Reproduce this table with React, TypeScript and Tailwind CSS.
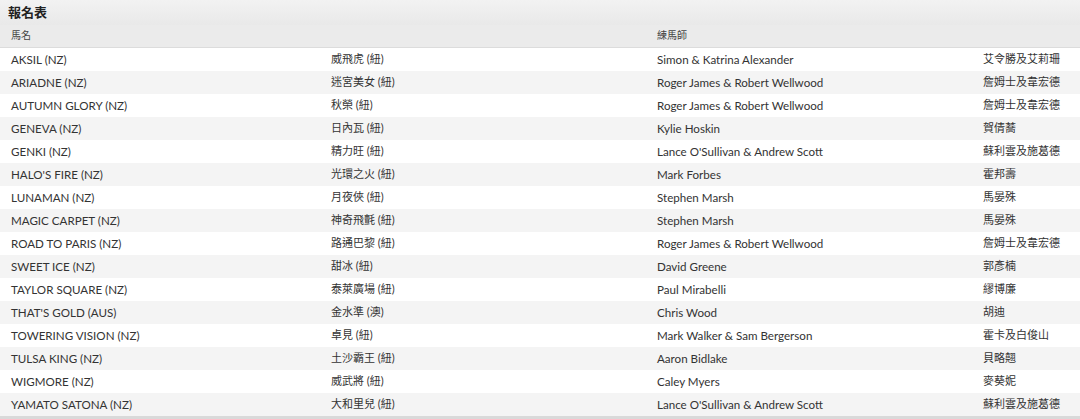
import React from "react";

const rows = [
  ["AKSIL (NZ)", "威飛虎 (紐)", "Simon & Katrina Alexander", "艾令勝及艾莉珊"],
  ["ARIADNE (NZ)", "迷宮美女 (紐)", "Roger James & Robert Wellwood", "詹姆士及韋宏德"],
  ["AUTUMN GLORY (NZ)", "秋榮 (紐)", "Roger James & Robert Wellwood", "詹姆士及韋宏德"],
  ["GENEVA (NZ)", "日內瓦 (紐)", "Kylie Hoskin", "賀倩蕎"],
  ["GENKI (NZ)", "精力旺 (紐)", "Lance O'Sullivan & Andrew Scott", "蘇利雲及施葛德"],
  ["HALO'S FIRE (NZ)", "光環之火 (紐)", "Mark Forbes", "霍邦壽"],
  ["LUNAMAN (NZ)", "月夜俠 (紐)", "Stephen Marsh", "馬晏殊"],
  ["MAGIC CARPET (NZ)", "神奇飛氈 (紐)", "Stephen Marsh", "馬晏殊"],
  ["ROAD TO PARIS (NZ)", "路通巴黎 (紐)", "Roger James & Robert Wellwood", "詹姆士及韋宏德"],
  ["SWEET ICE (NZ)", "甜冰 (紐)", "David Greene", "郭彥楠"],
  ["TAYLOR SQUARE (NZ)", "泰萊廣場 (紐)", "Paul Mirabelli", "繆博廉"],
  ["THAT'S GOLD (AUS)", "金水準 (澳)", "Chris Wood", "胡迪"],
  ["TOWERING VISION (NZ)", "卓見 (紐)", "Mark Walker & Sam Bergerson", "霍卡及白俊山"],
  ["TULSA KING (NZ)", "土沙霸王 (紐)", "Aaron Bidlake", "貝略翹"],
  ["WIGMORE (NZ)", "威武將 (紐)", "Caley Myers", "麥葵妮"],
  ["YAMATO SATONA (NZ)", "大和里兒 (紐)", "Lance O'Sullivan & Andrew Scott", "蘇利雲及施葛德"],
];

const font = { fontFamily: 'Lato, "Noto Sans CJK TC", sans-serif' };

export default function App() {
  return (
    <div className="w-[1080px] h-[419px] bg-white overflow-hidden text-[#333]" style={font}>
      {/* title */}
      <div className="h-[25px] bg-gradient-to-b from-[#f2f2f2] to-[#e9e9e9] flex items-center pl-[8px] shadow-[0_1px_2px_rgba(0,0,0,0.12)]">
        <span className="text-[13px] font-bold text-[#222]">報名表</span>
      </div>
      {/* header */}
      <div className="h-[23px] bg-[#ebebeb] border-b border-[#dcdcdc] grid grid-cols-[320px_326px_326px_1fr] items-center pl-[11px] pb-[1px] text-[10px] text-[#444]">
        <span>馬名</span>
        <span></span>
        <span>練馬師</span>
        <span></span>
      </div>
      {/* rows */}
      <div>
        {rows.map((r, i) => (
          <div
            key={r[0]}
            className={`h-[23px] grid grid-cols-[320px_326px_326px_1fr] items-center pl-[11px] text-[11.6px] ${i % 2 === 0 ? "bg-white" : "bg-[#f4f4f4]"}`}
          >
            <span className="whitespace-nowrap">{r[0]}</span>
            <span className="whitespace-nowrap text-[11px]">{r[1]}</span>
            <span className="whitespace-nowrap">{r[2]}</span>
            <span className="whitespace-nowrap text-[11px]">{r[3]}</span>
          </div>
        ))}
      </div>
      <div className="h-[4px] bg-[#d9d9d9]" />
    </div>
  );
}
